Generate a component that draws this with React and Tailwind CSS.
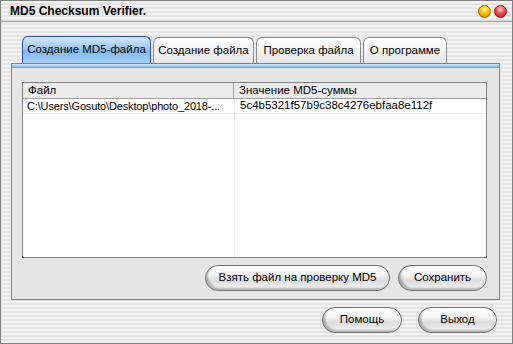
import React from "react";

const stripes =
  "bg-[repeating-linear-gradient(180deg,#f2f2f2_0px,#f2f2f2_2px,#e4e4e4_2px,#e4e4e4_4px)]";

function Tab({ label, active, w }) {
  if (active) {
    return (
      <div className={`${w} h-[27px] flex items-center justify-center rounded-t-[6px] border border-b-0 border-[#2a4fa8] bg-[linear-gradient(180deg,#cfe6ff_0%,#9ccaf8_45%,#7db7f2_55%,#a7d2fb_100%)] text-[11.5px] text-black`}>
        {label}
      </div>
    );
  }
  return (
    <div className={`${w} h-[26px] flex items-center justify-center rounded-t-[6px] border border-b-0 border-[#8a8a8a] bg-[linear-gradient(180deg,#ffffff_0%,#f4f4f4_50%,#e6e6e6_100%)] text-[11.5px] text-black`}>
      {label}
    </div>
  );
}

function PillButton({ label, w }) {
  return (
    <button
      className={`${w} h-[26px] rounded-[13px] border border-[#6f6f6f] bg-[linear-gradient(180deg,#ffffff_0%,#f2f2f2_40%,#dcdcdc_60%,#f6f6f6_100%)] shadow-[inset_2px_-2px_2px_rgba(0,0,0,0.25),inset_-1px_1px_1px_#ffffff] text-[11.5px] text-black flex items-center justify-center`}
    >
      {label}
    </button>
  );
}

export default function App() {
  return (
    <div
      className={`w-[513px] h-[344px] border border-[#7f7f7f] ${stripes} flex flex-col`}
      style={{ fontFamily: '"Liberation Sans", Arial, sans-serif' }}
    >
      <div className="h-[21px] shrink-0 flex items-center justify-between pl-[9px] pr-[5px] border-b border-[#9a9a9a]">
        <span className="text-[12px] font-bold text-black">MD5 Checksum Verifier.</span>
        <div className="flex gap-[3px]">
          <span className="w-[13px] h-[13px] rounded-full border border-[#a06000] bg-[radial-gradient(circle_at_50%_30%,#fff6b0_0%,#ffc400_45%,#e07a00_100%)]" />
          <span className="w-[13px] h-[13px] rounded-full border border-[#a01010] bg-[radial-gradient(circle_at_50%_30%,#ffd0d0_0%,#f05050_45%,#b80e0e_100%)]" />
        </div>
      </div>

      <div className="flex items-end gap-[2px] ml-[21px] mt-[14px] h-[27px]">
        <Tab label="Создание MD5-файла" w="w-[129px]" active />
        <Tab label="Создание файла" w="w-[101px]" />
        <Tab label="Проверка файла" w="w-[105px]" />
        <Tab label="О программе" w="w-[84px]" />
      </div>

      <div className="ml-[10px] w-[489px] h-[237px] border border-[#7f7f7f] bg-[#e6e6e6] flex flex-col">
        <div className="h-[4px] shrink-0 bg-[linear-gradient(180deg,#d6ebff_0%,#9fcbf7_50%,#5f9be0_100%)]" />
        <div className="ml-[10px] mt-[14px] w-[465px] h-[176px] border border-[#7f7f7f] bg-white flex flex-col text-[11.5px] text-black">
          <div className="h-[16px] shrink-0 flex bg-[#ececec] border-b border-[#a0a0a0]">
            <div className="w-[211px] pl-[5px] flex items-center border-r border-[#a0a0a0]">Файл</div>
            <div className="pl-[5px] flex items-center">Значение MD5-суммы</div>
          </div>
          <div className="flex-1 flex">
            <div className="w-[212px] border-r border-[#ececec] flex flex-col">
              <div className="h-[15px] pl-[4px] flex items-center border-b border-[#ececec] whitespace-nowrap text-[11px] tracking-[-0.15px]">
                C:\Users\Gosuto\Desktop\photo_2018-...
              </div>
            </div>
            <div className="flex-1 flex flex-col">
              <div className="h-[15px] pl-[5px] flex items-center border-b border-[#ececec]">
                5c4b5321f57b9c38c4276ebfaa8e112f
              </div>
            </div>
          </div>
        </div>
        <div className="flex justify-end gap-[8px] mt-[7px] mr-[12px]">
          <PillButton label="Взять файл на проверку MD5" w="w-[185px]" />
          <PillButton label="Сохранить" w="w-[89px]" />
        </div>
      </div>

      <div className="flex justify-end gap-[16px] mt-[7px] mr-[15px]">
        <PillButton label="Помощь" w="w-[80px]" />
        <PillButton label="Выход" w="w-[79px]" />
      </div>
    </div>
  );
}
